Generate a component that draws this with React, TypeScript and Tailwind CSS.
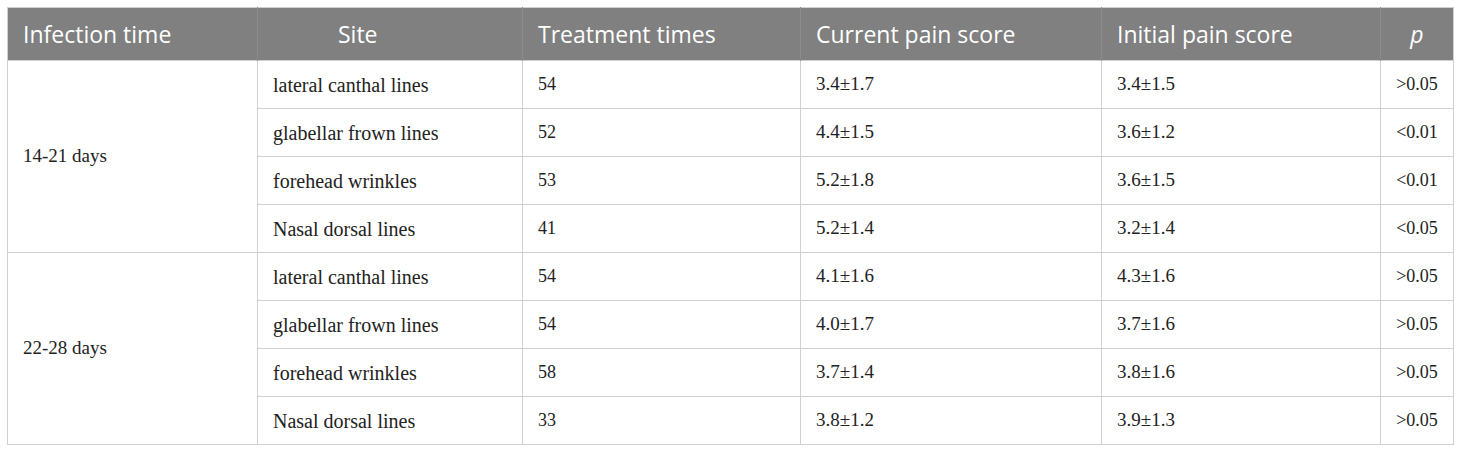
import React from "react";

type Row = {
  site: string;
  times: string;
  current: string;
  initial: string;
  p: string;
};

const groups: { label: string; rows: Row[] }[] = [
  {
    label: "14-21 days",
    rows: [
      { site: "lateral canthal lines", times: "54", current: "3.4±1.7", initial: "3.4±1.5", p: ">0.05" },
      { site: "glabellar frown lines", times: "52", current: "4.4±1.5", initial: "3.6±1.2", p: "<0.01" },
      { site: "forehead wrinkles", times: "53", current: "5.2±1.8", initial: "3.6±1.5", p: "<0.01" },
      { site: "Nasal dorsal lines", times: "41", current: "5.2±1.4", initial: "3.2±1.4", p: "<0.05" },
    ],
  },
  {
    label: "22-28 days",
    rows: [
      { site: "lateral canthal lines", times: "54", current: "4.1±1.6", initial: "4.3±1.6", p: ">0.05" },
      { site: "glabellar frown lines", times: "54", current: "4.0±1.7", initial: "3.7±1.6", p: ">0.05" },
      { site: "forehead wrinkles", times: "58", current: "3.7±1.4", initial: "3.8±1.6", p: ">0.05" },
      { site: "Nasal dorsal lines", times: "33", current: "3.8±1.2", initial: "3.9±1.3", p: ">0.05" },
    ],
  },
];

const cell = "border border-[#d0d0d0] px-[15px] align-middle";

export default function App() {
  return (
    <div className="bg-white pl-[7px] pt-[7px] w-[1460px] h-[454px]">
      <table className="w-[1446px] table-fixed border-collapse border border-[#d0d0d0] text-[#222]">
        <colgroup>
          <col className="w-[250px]" />
          <col className="w-[265px]" />
          <col className="w-[278px]" />
          <col className="w-[301px]" />
          <col className="w-[279px]" />
          <col className="w-[73px]" />
        </colgroup>
        <thead>
          <tr className="h-[53px] bg-[#808080] text-white text-[23px] font-['Open_Sans',sans-serif]">
            <th className="border-r border-[#8c8c8c] px-[15px] text-left font-normal">Infection time</th>
            <th className="border-r border-[#8c8c8c] pl-[80px] text-left font-normal">Site</th>
            <th className="border-r border-[#8c8c8c] px-[15px] text-left font-normal">Treatment times</th>
            <th className="border-r border-[#8c8c8c] px-[15px] text-left font-normal">Current pain score</th>
            <th className="border-r border-[#8c8c8c] px-[15px] text-left font-normal">Initial pain score</th>
            <th className="px-[15px] text-center font-normal italic">p</th>
          </tr>
        </thead>
        <tbody className="font-['Liberation_Serif',serif]">
          {groups.map((g) =>
            g.rows.map((r, i) => (
              <tr key={g.label + i} className="h-[48px]">
                {i === 0 ? (
                  <td rowSpan={g.rows.length} className={`${cell} text-[19px]`}>
                    {g.label}
                  </td>
                ) : null}
                <td className={`${cell} text-[20px]`}>{r.site}</td>
                <td className={`${cell} text-[18px]`}>{r.times}</td>
                <td className={`${cell} text-[19px]`}>{r.current}</td>
                <td className={`${cell} text-[19px]`}>{r.initial}</td>
                <td className={`${cell} text-center text-[18px]`}>{r.p}</td>
              </tr>
            ))
          )}
        </tbody>
      </table>
    </div>
  );
}
